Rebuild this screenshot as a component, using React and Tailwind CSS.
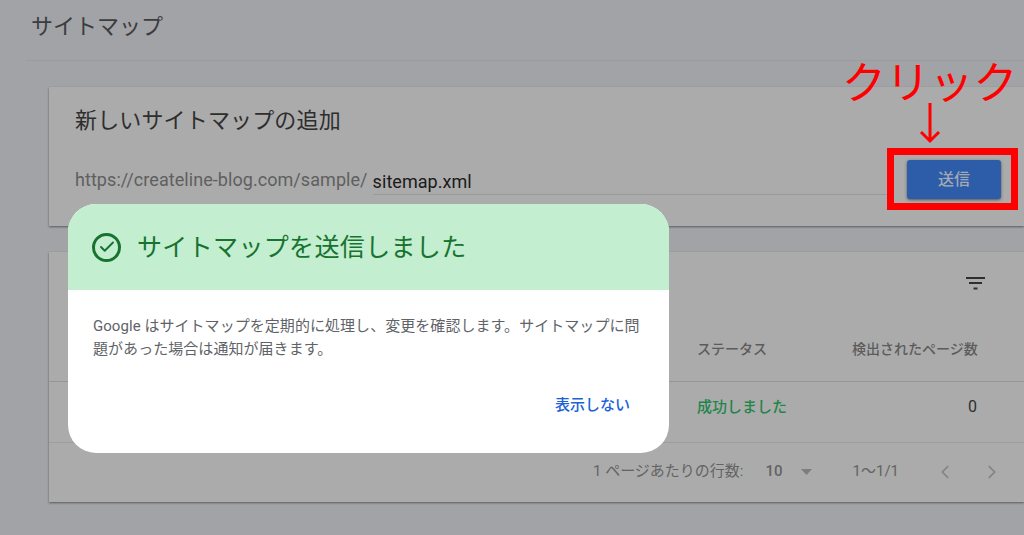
import { Check, ChevronLeft, ChevronRight } from "lucide-react";

const jp = {
  fontFamily: '"Roboto", "Noto Sans CJK JP", sans-serif',
};

const SuccessDialog = () => (
  <div className="absolute left-[68px] top-[204px] w-[601px] h-[249px] rounded-[28px] bg-white overflow-hidden">
    <div className="h-[86px] bg-[#c3eed0] flex items-center pl-[24px] gap-[16px]">
      <div className="w-[29px] h-[29px] rounded-full border-[3px] border-[#17732f] flex items-center justify-center">
        <Check size={18} strokeWidth={2.6} className="text-[#17732f]" />
      </div>
      <h2 className="text-[25px] leading-none tracking-[0.35px] text-[#17732f]">
        サイトマップを送信しました
      </h2>
    </div>
    <p className="mt-[25px] ml-[25px] w-[552px] text-[15px] leading-[23px] tracking-[0.05px] text-[#5f6368]">
      Google はサイトマップを定期的に処理し、変更を確認します。サイトマップに問題があった場合は通知が届きます。
    </p>
    <div className="mt-[34px] mr-[39px] flex justify-end">
      <button className="text-[15px] leading-[20px] font-medium text-[#1a62d6]">
        表示しない
      </button>
    </div>
  </div>
);

const App = () => {
  return (
    <div
      className="relative w-[1024px] h-[535px] overflow-hidden bg-[#a2a3a7]"
      style={jp}
    >
      <div className="h-[61px] ml-[26px] border-b border-[#9a9b9c] pl-[5px] pt-[12px]">
        <h1 className="text-[22px] leading-[30px] text-[#3b3c3e]">サイトマップ</h1>
      </div>

      <div className="ml-[49px] mt-[26px] flex flex-col gap-[26px]">
        <section className="h-[139px] bg-[#ababab] shadow-[0_1px_2px_rgba(0,0,0,0.45)] pl-[26px] pr-[23px]">
          <h2 className="pt-[20px] text-[22px] leading-[28px] tracking-[0.15px] text-[#2e2e2e]">
            新しいサイトマップの追加
          </h2>
          <div className="mt-[25px] flex items-start">
            <span className="mt-[8px] text-[18px] leading-[24px] tracking-[0.06px] text-[#5f5f5f] whitespace-nowrap">
              https://createline-blog.com/sample/
            </span>
            <div className="ml-[5px] mt-[9px] flex-1 h-[26px] border-b border-[#999999] text-[18px] leading-[25px] tracking-[0.05px] text-[#1a1a1a]">
              sitemap.xml
            </div>
            <button className="ml-[20px] w-[94px] h-[39px] rounded-[3px] bg-[#2d5ca8] shadow-[0_1px_3px_rgba(0,0,0,0.5)] text-[16px] font-medium text-[#a3a9b5]">
              送信
            </button>
          </div>
        </section>

        <section className="h-[250px] bg-[#ababab] shadow-[0_1px_2px_rgba(0,0,0,0.45)] flex flex-col">
          <div className="h-[81px] flex justify-end items-start pr-[39px] pt-[25px]">
            <svg width="19" height="13" viewBox="0 0 19 13" fill="#2e2e2e">
              <rect x="0" y="0" width="19" height="2" />
              <rect x="3" y="5" width="13" height="2" />
              <rect x="7.5" y="10.5" width="4" height="2" />
            </svg>
          </div>
          <div className="h-[49px] pb-[16px] flex items-center text-[14px] font-medium text-[#5c5c5c] border-b border-[#969696]">
            <span className="ml-[648px] w-[155px]">ステータス</span>
            <span className="w-[125px] whitespace-nowrap">検出されたページ数</span>
          </div>
          <div className="h-[61px] pb-[10px] flex items-center text-[15px] border-b border-[#9d9d9d]">
            <span className="ml-[648px] w-[155px] font-medium text-[#1f8549]">成功しました</span>
            <span className="w-[125px] text-right text-[16px] text-[#2e2e2e]">0</span>
          </div>
          <div className="flex-1 flex items-center pb-[2px] text-[15px] text-[#636363]">
            <span className="ml-[544px] whitespace-nowrap">1 ページあたりの行数:</span>
            <span className="ml-[22px] font-medium">10</span>
            <svg className="ml-[18px]" width="11" height="6" viewBox="0 0 11 6" fill="#7d7d7d">
              <polygon points="0,0 11,0 5.5,6" />
            </svg>
            <span className="ml-[41px] whitespace-nowrap">1〜1/1</span>
            <ChevronLeft size={22} strokeWidth={1.8} className="ml-[35px] text-[#808080]" />
            <ChevronRight size={22} strokeWidth={1.8} className="ml-[25px] text-[#808080]" />
          </div>
        </section>
      </div>

      <SuccessDialog />

      {/* annotation */}
      <div className="absolute left-[887px] top-[148px] w-[131px] h-[62px] border-[7px] border-[#ff0000]" />
      <div className="absolute left-[842px] top-[56px] text-[44px] leading-[56px] tracking-[-0.2px] whitespace-nowrap text-[#ff0000]">
        クリック
      </div>
      <svg className="absolute left-[918px] top-[102px]" width="26" height="42" viewBox="0 0 26 42" fill="none" stroke="#ff0000" strokeWidth="3">
        <path d="M12 1V39M3 30l9 9 9-9" />
      </svg>
    </div>
  );
};

export default App;
